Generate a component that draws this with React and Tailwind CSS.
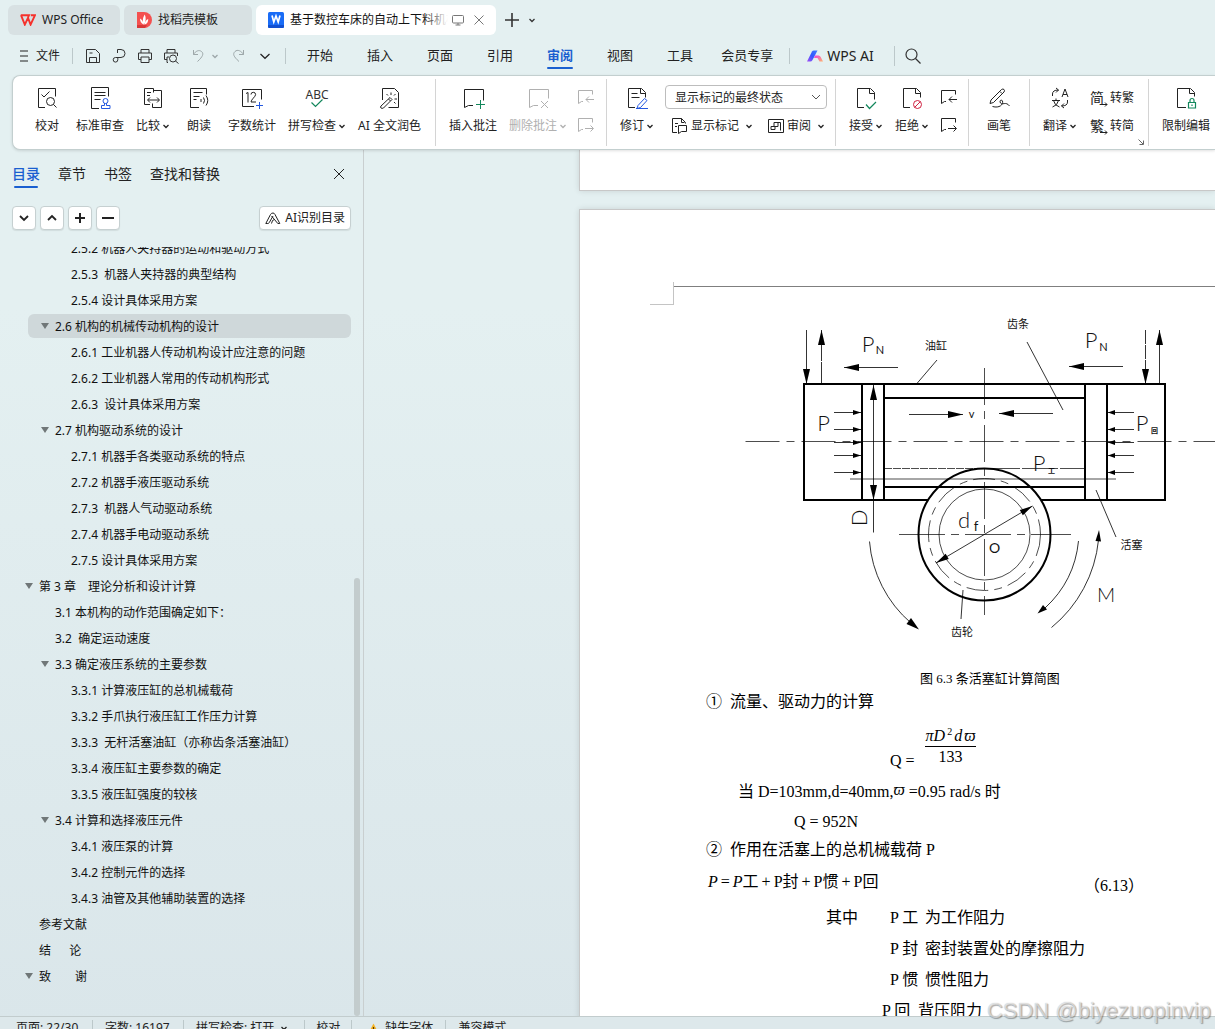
import React from "react";

const UI = "font-['Noto_Sans','Noto_Sans_CJK_SC',sans-serif]";

function Svg({ size = 16, box = 16, className = "", sw = 1, children }) {
  return (
    <svg
      width={size}
      height={size}
      viewBox={`0 0 ${box} ${box}`}
      fill="none"
      stroke="currentColor"
      strokeWidth={sw}
      className={`shrink-0 overflow-visible ${className}`}
      aria-hidden="true"
    >
      {children}
    </svg>
  );
}

const Chevron = ({ className = "" }) => (
  <Svg size={8} box={8} sw={1.3} className={className}>
    <path d="M1.500 3 4 5.500 6.500 3" />
  </Svg>
);

/* ---------- tab strip ---------- */

function TabStrip() {
  return (
    <div className="flex h-10 shrink-0 items-center gap-1 pl-2">
      <button className="flex h-[30px] w-28 items-center gap-1.5 rounded-md bg-[#d8e1e3] pl-3 text-xs text-[#222]">
        <svg width="16" height="12" viewBox="0 0 16 12" aria-hidden="true">
          <path d="M0.8 1.2H9L7.800 4 M1 1.2 4.800 10.600 8 3.800 10.600 10.600 15 1.2H10.800" fill="none" stroke="#f5322d" strokeWidth="1.900" />
        </svg>
        WPS Office
      </button>
      <button className="flex h-[30px] w-32 items-center gap-1.5 rounded-md bg-[#d8e1e3] pl-3 text-xs text-[#222]">
        <svg width="16" height="16" viewBox="0 0 16 16" aria-hidden="true">
          <path d="M1 0h7a7.500 7.500 0 0 1 0 16H1z" fill="#f4504f" />
          <path d="M1 13h10l-2 3H1z" fill="#d93838" />
          <path d="M8 13C6 9 7 5 8.800 2.500c1.400 3 1.200 7-.8 10.500zM7.400 12.600C5 11 4 9 4 6.500c2 1 3.300 3 3.400 6.100zM8.800 12.600c.2-3 1.400-4.600 3.400-5.600.2 2.600-1 4.600-3.400 5.600z" fill="#fff" />
        </svg>
        找稻壳模板
      </button>
      <div className="flex h-[30px] w-60 items-center rounded-md bg-white pl-3 pr-2.5">
        <svg width="16" height="16" viewBox="0 0 16 16" className="shrink-0" aria-hidden="true">
          <rect width="16" height="16" rx="1.500" fill="#1a6cf6" />
          <path d="M0 13h16v1.500a1.500 1.500 0 0 1-1.500 1.500h-13A1.500 1.500 0 0 1 0 14.500z" fill="#1250d0" />
          <path d="m4 3.500 1.800 6.500L8 4l2.200 6L12 3.500" fill="none" stroke="#fff" strokeWidth="1.700" />
        </svg>
        <button className="relative ml-1.5 w-[158px] overflow-hidden text-left text-xs whitespace-nowrap text-[#111]">
          基于数控车床的自动上下料机构
          <span className="absolute inset-y-0 right-0 w-6 bg-linear-to-r from-white/0 to-white" />
        </button>
        <Svg size={12} box={12} className="ml-1 text-[#777]">
          <rect x="0.500" y="1.500" width="11" height="7.500" rx="1" />
          <path d="M6 9v2M3.500 11h5" />
        </Svg>
        <button aria-label="关闭标签" className="ml-2.5 text-[#777]">
          <Svg size={10} box={10}>
            <path d="m.5.5 9 9m0-9-9 9" />
          </Svg>
        </button>
      </div>
      <button aria-label="新建" className="ml-[5px] text-[#333]">
        <Svg size={14} box={14} sw={1.6}>
          <path d="M7 0v14M0 7h14" />
        </Svg>
      </button>
      <button aria-label="标签列表" className="ml-[5px] text-[#333]">
        <Chevron />
      </button>
    </div>
  );
}

/* ---------- menu row ---------- */

const menus = ["开始", "插入", "页面", "引用", "审阅", "视图", "工具"];

function MenuRow() {
  return (
    <div className="flex h-[35px] shrink-0 items-center pb-1 text-[#222]">
      <button className="ml-5 flex items-center gap-2 text-xs">
        <Svg size={8} box={8}>
          <path d="M0 -1h8M0 4h8M0 9h8" />
        </Svg>
        文件
      </button>
      <span className="mx-3 h-4 w-px bg-[#bcc8ca]" />
      <div className="flex items-center gap-2.5 text-[#333]">
        <button aria-label="保存">
          <Svg>
            <path d="M1.500 1.500h9l4 4v9h-13zM4.500 14.500v-5h7v5M4.500 5h3" />
          </Svg>
        </button>
        <button aria-label="输出为PDF">
          <Svg>
            <path d="M6.500 5V1.500H10a4 4 0 0 1 0 8H4.500a2.300 2.300 0 1 0 2.300 2.300V9.500" />
          </Svg>
        </button>
        <button aria-label="打印">
          <Svg>
            <path d="M4 5V1.500h8V5M4 11.500H1.500V5h13v6.500H12M4 9h8v5.500H4z" />
          </Svg>
        </button>
        <button aria-label="打印预览">
          <Svg>
            <path d="M4 5V1.500h8V5M4 11.500H1.500V5h13v3M5 14.500H4V9h2" />
            <circle cx="10" cy="10.500" r="3.500" />
            <path d="m12.500 13 3 2.500" />
          </Svg>
        </button>
      </div>
      <button aria-label="撤销" className="ml-3 flex items-center gap-1 text-[#9da7a9]">
        <Svg>
          <path d="M2.500 2v4.500H7M2.500 6.500C4.500 3 8 1.500 10.500 3.500s1.500 5-4 10" />
        </Svg>
        <Chevron />
      </button>
      <button aria-label="恢复" className="ml-3 text-[#9da7a9]">
        <Svg>
          <path d="M12.500 2v4.500H8M12.500 6.500C10.500 3 6.500 1 4 3.500s-1.500 5 4 10" />
        </Svg>
      </button>
      <button aria-label="更多" className="ml-3">
        <Svg size={12} box={12} sw={1.2}>
          <path d="m1.500 4 4.500 4.300L10.500 4" />
        </Svg>
      </button>
      <span className="ml-3.5 h-4 w-px bg-[#bcc8ca]" />
      <nav className="-mt-0.5 ml-[21px] flex items-center gap-[34px] text-[13px] leading-5">
        {menus.map((m) =>
          m === "审阅" ? (
            <button key={m} className="relative font-bold text-[#1a5fd0]">
              {m}
              <span className="absolute inset-x-0 -bottom-1 h-0.5 rounded bg-[#1a5fd0]" />
            </button>
          ) : (
            <button key={m}>{m}</button>
          )
        )}
        <button className="-ml-1.5">会员专享</button>
      </nav>
      <span className="ml-4 h-4 w-px bg-[#bcc8ca]" />
      <button className="ml-[17px] flex items-center gap-[3px] text-sm">
        <svg width="17" height="12" viewBox="0 0 17 12" aria-hidden="true">
          <defs>
            <linearGradient id="aiA" x1="0" y1="1" x2="1" y2="0">
              <stop offset="0" stopColor="#a84df5" />
              <stop offset="0.500" stopColor="#3357ff" />
              <stop offset="1" stopColor="#3f7bff" />
            </linearGradient>
            <linearGradient id="aiB" x1="0" y1="0" x2="1" y2="1">
              <stop offset="0" stopColor="#f03fe0" />
              <stop offset="1" stopColor="#ffb46b" />
            </linearGradient>
          </defs>
          <path d="M0 11.500 5 1.500Q5.500.5 7 .5h3.500L5.500 10q-.8 1.500-2.300 1.500z" fill="url(#aiA)" />
          <path d="M8 5.500h3.500q1.500 0 2.200 1.500l2.300 4.500h-3.500L10.500 8H7z" fill="url(#aiB)" />
        </svg>
        WPS AI
      </button>
      <span className="ml-5 h-5 w-px bg-[#bcc8ca]" />
      <button aria-label="搜索" className="ml-2.5 text-[#333]">
        <Svg sw={1.2}>
          <circle cx="6.500" cy="6.500" r="5.500" />
          <path d="m10.500 10.500 5 5" />
        </Svg>
      </button>
    </div>
  );
}

/* ---------- ribbon ---------- */

const I = ({ children }) => (
  <Svg size={24} box={24}>
    {children}
  </Svg>
);

const icons = {
  proof: (
    <I>
      <path d="M10 21.500H3.500v-19h17v8M6.500 8.500 9 11l5.500-5.500" />
      <circle cx="15.500" cy="15.500" r="4" />
      <path d="m18.500 18.500 3 3" />
    </I>
  ),
  standard: (
    <I>
      <path d="M11 22.500H3.500v-21h17v9M6.500 6.500h11M6.500 9.500h11M6.500 13.500h6" />
      <g stroke="#2458e0">
        <circle cx="17.500" cy="15" r="2.500" />
        <path d="M16.500 17v2.500h-3v3h8.500v-3h-3.500V17" />
      </g>
    </I>
  ),
  compare: (
    <I>
      <path d="M9 18.500H3.500v-16h9v4M6 6.500h4M6 9.500h3M12.500 4.500h8v17h-9v-4M7 14h11M9 11.500 6.500 14 9 16.500M16 11.500l2.500 2.500-2.500 2.500" />
    </I>
  ),
  read: (
    <I>
      <path d="M12 21.500H3.500v-19h16v6M6.500 6.500h9M6.500 10.500h6M6.500 13.500h3M14 13v3M16.500 11.500q2 3 0 6M19 9.500q3.500 5 0 10" />
    </I>
  ),
  count: (
    <I>
      <path d="M14 20.500H2.500v-17h19v10M6 7.500l2-1v10M11 8.500q0-2.200 2.300-2.200t2.300 2.300c0 2-4.600 5-4.600 7.400h5" />
      <path d="M19.500 16v7M16 19.500h7" stroke="#2458e0" />
    </I>
  ),
  spell: (
    <I>
      <text x="12" y="13" textAnchor="middle" fontSize="12" fontFamily="Noto Sans" fill="#333" stroke="none">
        ABC
      </text>
      <path d="m6.500 16.500 4 4 7-7" stroke="#12875c" strokeWidth="1.200" />
    </I>
  ),
  polish: (
    <I>
      <path d="M4.500 14V2.500h12l4 4v15h-10M3 20l9-8.500 2 2L5.500 22q-1.500.8-2.500 0t0-2zM10.500 13l2 2M13 6.500V9M8.500 8l1.500 1.500M17.500 8 16 9.500M16.500 13H19M16 16l1.500 1.500" />
    </I>
  ),
  addNote: (
    <I>
      <path d="M12 19.500H7.500l-4 2v-18h19v11" />
      <path d="M19.500 14v9M15 18.500h9" stroke="#12875c" />
    </I>
  ),
  delNote: (
    <I>
      <path d="M12 19.500H7.500l-4 2v-18h19v9M15 15l7 7m0-7-7 7" />
    </I>
  ),
  revise: (
    <I>
      <path d="M10 21.500H3.500v-19h13l4 4v5M15.500 3v4.500h5M6.500 7.500h6M6.500 11.500h8" />
      <path d="m13 19.500 6.500-7 2.500 2-6.500 7-3.500 1zM11 22.500h12" stroke="#2458e0" />
    </I>
  ),
  accept: (
    <I>
      <path d="M10 21.500H3.500v-19h13l4 4v7M15.500 3v4.500h5" />
      <path d="m12 18.500 3.500 4 6.500-6.500" stroke="#12875c" strokeWidth="1.200" />
    </I>
  ),
  reject: (
    <I>
      <path d="M10 21.500H3.500v-19h13l4 4v5M15.500 3v4.500h5" />
      <g stroke="#d02040">
        <circle cx="17.500" cy="18.500" r="4" />
        <path d="m14.800 21.200 5.400-5.400" />
      </g>
    </I>
  ),
  pen: (
    <I>
      <path d="M4 14 14.500 3.500q1.500-1 2.500 0t0 2.500L6.500 16.500 3 17.500zM13 5.500l2 2M5.500 20.500c7 2 11-2 10-5.500-1-2-3.500-.5-2 2s5.500-2 9 3" />
    </I>
  ),
  translate: (
    <I>
      <path d="M4.500 10V8q0-4 6-4M8 2l2.500 2L8 6.500M19.500 14v2q0 4-6 4M16 17.500 13.500 20l2.500 2M14 11l3-8 3 8M15 8.500h4M4 14.500h8M8 12.500v2M5.500 14.500q1 5 6 6.500M10.500 14.500q-1 5-6 6.500" />
    </I>
  ),
  restrict: (
    <I>
      <path d="M12 21.500H3.500v-19h13l4 4v4M15.500 3v4.500h5" />
      <path d="M14.500 16.500h7v5.500h-7zM16 16.500v-2q0-2 2-2t2 2v2M18 18.500v1.500" stroke="#12875c" strokeWidth="1.200" />
    </I>
  ),
};

const Tool = ({ icon, label, menu, className = "", disabled }) => (
  <button
    disabled={disabled}
    className={`flex shrink-0 flex-col items-center gap-2 pt-2.5 ${className} ${disabled ? "text-[#b0b0b0]" : "text-[#222]"}`}
  >
    {icons[icon]}
    <span className="flex items-center gap-0.5 text-xs leading-4 whitespace-nowrap">
      {label}
      {menu && <Chevron />}
    </span>
  </button>
);

const Bar = ({ className = "" }) => <span className={`my-[3px] w-px shrink-0 bg-[#d4d4d4] ${className}`} />;

const NoteArrow = ({ back }) => (
  <Svg size={18} box={18}>
    <path d="M6 13.500H4.500l-3 2v-13h14v4" />
    {back ? <path d="M17 11.500H9M12 8.500l-3 3 3 3" /> : <path d="M8 12.500h8M13.500 9.500l3 3-3 3" />}
  </Svg>
);

const NotePair = ({ className = "", disabled, names }) => (
  <div className={`flex shrink-0 flex-col gap-1 pt-[9px] ${className} ${disabled ? "text-[#b0b0b0]" : "text-[#222]"}`}>
    <button aria-label={names[0]} disabled={disabled} className="flex h-6 items-center">
      <NoteArrow back />
    </button>
    <button aria-label={names[1]} disabled={disabled} className="flex h-6 items-center">
      <NoteArrow />
    </button>
  </div>
);

const ConvertIcon = ({ char }) => (
  <span className="relative w-[18px] text-left text-sm leading-5">
    {char}
    <Svg size={8} box={8} className="absolute right-0 bottom-0">
      <path d="M0 4.500h7M5 2.500l2 2-2 2" />
    </Svg>
  </span>
);

function Ribbon() {
  return (
    <div className="relative z-10 ml-3 flex h-[75px] shrink-0 overflow-hidden rounded-l-lg border border-r-0 border-[#c3cfcf] bg-white shadow-[0_1px_3px_rgba(0,0,0,0.12)]">
      <Tool icon="proof" label="校对" className="ml-[22px]" />
      <Tool icon="standard" label="标准审查" className="ml-[17px]" />
      <Tool icon="compare" label="比较" menu className="ml-3" />
      <Tool icon="read" label="朗读" className="ml-[17px]" />
      <Tool icon="count" label="字数统计" className="ml-[17px]" />
      <Tool icon="spell" label="拼写检查" menu className="ml-3" />
      <Tool icon="polish" label="AI 全文润色" className="ml-3" />
      <Bar className="ml-3.5" />
      <Tool icon="addNote" label="插入批注" className="ml-[13px]" />
      <Tool icon="delNote" label="删除批注" menu disabled className="ml-3" />
      <NotePair className="ml-2.5" disabled names={["上一条批注", "下一条批注"]} />
      <Bar className="ml-[11px]" />
      <Tool icon="revise" label="修订" menu className="ml-[13px]" />
      <div className="ml-[11px] flex shrink-0 flex-col gap-1 pt-[9px] text-xs text-[#222]">
        <div className="relative flex h-6 w-[162px] items-center">
          <select
            aria-label="标记显示状态"
            defaultValue="final"
            className="h-6 w-full appearance-none rounded border border-[#bdbdbd] bg-white pt-0.5 pl-[9px] text-xs leading-4"
          >
            <option value="final">显示标记的最终状态</option>
          </select>
          <Svg size={10} box={10} className="pointer-events-none absolute right-1.5 text-[#555]">
            <path d="m1 3 4 4 4-4" />
          </Svg>
        </div>
        <div className="flex h-6 items-center pt-0.5 pl-1.5">
          <button className="flex items-center gap-0.5">
            <Svg size={18} box={18}>
              <path d="M6 15.500H1.500v-14h9l4 4v1M10.500 1.500v4h3M4 6.500h3M4 9.500h2M7.500 16.500v-8h8v6h-5z" />
            </Svg>
            显示标记
            <Chevron className="ml-1" />
          </button>
          <button className="ml-3.5 flex items-center gap-0.5">
            <Svg size={18} box={18}>
              <path d="M1.500 2.500h15v13h-15zM4 9.500h4v3H4zM7 9.500v-4h4v4H8M13.500 5.500v8M11 5.500h2.500" />
            </Svg>
            审阅
            <Chevron className="ml-1" />
          </button>
        </div>
      </div>
      <Bar className="ml-2" />
      <Tool icon="accept" label="接受" menu className="ml-[13px]" />
      <Tool icon="reject" label="拒绝" menu className="ml-3" />
      <NotePair className="ml-[11px]" names={["上一条修订", "下一条修订"]} />
      <Bar className="ml-2.5" />
      <Tool icon="pen" label="画笔" className="ml-[18px]" />
      <Bar className="ml-[18px]" />
      <Tool icon="translate" label="翻译" menu className="ml-[13px]" />
      <div className="ml-[13px] flex shrink-0 flex-col gap-1 pt-2.5 text-xs text-[#222]">
        <button className="flex h-6 items-center gap-0.5">
          <ConvertIcon char="简" />
          转繁
        </button>
        <button className="flex h-6 items-center gap-0.5">
          <ConvertIcon char="繁" />
          转简
        </button>
      </div>
      <button aria-label="更多选项" className="mb-1 ml-1 self-end text-[#666]">
        <Svg size={6} box={6}>
          <path d="m.5.5 4.500 4.500M5.500 1.500v4h-4" />
        </Svg>
      </button>
      <Bar className="ml-1" />
      <Tool icon="restrict" label="限制编辑" className="ml-[13px]" />
    </div>
  );
}

/* ---------- outline panel ---------- */

const outline = [
  [3, "2.5.2 机器人夹持器的运动和驱动方式"],
  [3, "2.5.3\u00a0 机器人夹持器的典型结构"],
  [3, "2.5.4 设计具体采用方案"],
  [2, "2.6 机构的机械传动机构的设计", true, true],
  [3, "2.6.1 工业机器人传动机构设计应注意的问题"],
  [3, "2.6.2 工业机器人常用的传动机构形式"],
  [3, "2.6.3\u00a0 设计具体采用方案"],
  [2, "2.7 机构驱动系统的设计", true],
  [3, "2.7.1 机器手各类驱动系统的特点"],
  [3, "2.7.2 机器手液压驱动系统"],
  [3, "2.7.3\u00a0 机器人气动驱动系统"],
  [3, "2.7.4 机器手电动驱动系统"],
  [3, "2.7.5 设计具体采用方案"],
  [1, "第 3 章\u3000理论分析和设计计算", true],
  [2, "3.1 本机构的动作范围确定如下："],
  [2, "3.2\u00a0 确定运动速度"],
  [2, "3.3 确定液压系统的主要参数", true],
  [3, "3.3.1 计算液压缸的总机械载荷"],
  [3, "3.3.2 手爪执行液压缸工作压力计算"],
  [3, "3.3.3\u00a0 无杆活塞油缸（亦称齿条活塞油缸）"],
  [3, "3.3.4 液压缸主要参数的确定"],
  [3, "3.3.5 液压缸强度的较核"],
  [2, "3.4 计算和选择液压元件", true],
  [3, "3.4.1 液压泵的计算"],
  [3, "3.4.2 控制元件的选择"],
  [3, "3.4.3 油管及其他辅助装置的选择"],
  [1, "参考文献"],
  [1, "结\u3000\u00a0 论"],
  [1, "致\u3000\u3000谢", true],
];

const indents = { 1: "pl-[11px]", 2: "pl-[27px]", 3: "pl-[43px]" };
const squareBtn =
  "flex size-6 items-center justify-center rounded border border-[#c6d0d1] bg-white text-[#222] shadow-[0_1px_1px_rgba(0,0,0,0.08)]";

function Outline() {
  return (
    <aside className="flex w-[364px] shrink-0 flex-col border-r border-[#c9cfd0]">
      <div className="flex h-12 shrink-0 items-center gap-[18px] pl-3 pr-[18px] text-sm leading-5 text-[#222]">
        <button className="relative font-medium text-[#1a5fd0]">
          目录
          <span className="absolute inset-x-0.5 -bottom-1 h-0.5 rounded bg-[#1a5fd0]" />
        </button>
        <button>章节</button>
        <button>书签</button>
        <button>查找和替换</button>
        <button aria-label="关闭" className="ml-auto">
          <Svg size={12} box={12}>
            <path d="m1 1 10 10M11 1 1 11" />
          </Svg>
        </button>
      </div>
      <div className="mt-2 flex shrink-0 items-center gap-1 px-3">
        <button aria-label="展开" className={squareBtn}>
          <Svg size={12} box={12} sw={1.8}>
            <path d="m2 4 4 4 4-4" />
          </Svg>
        </button>
        <button aria-label="收起" className={squareBtn}>
          <Svg size={12} box={12} sw={1.8}>
            <path d="m2 8 4-4 4 4" />
          </Svg>
        </button>
        <button aria-label="提升" className={squareBtn}>
          <Svg size={12} box={12} sw={2}>
            <path d="M6 1v10M1 6h10" />
          </Svg>
        </button>
        <button aria-label="降低" className={squareBtn}>
          <Svg size={12} box={12} sw={2}>
            <path d="M0 6h12" />
          </Svg>
        </button>
        <button className="ml-auto flex h-6 items-center gap-1 rounded border border-[#c6d0d1] bg-white px-[5px] text-xs text-[#222] shadow-[0_1px_1px_rgba(0,0,0,0.08)]">
          <Svg>
            <path d="M.8 13.500 5.500 4.500q.8-1.500 2.500-1.500 1.300 0 2 1.500l4.800 9h-2L6.500 6M.8 13.500h2q1 0 1.500-1L8 6M9.500 9.500q-2.500 0-3 4" />
          </Svg>
          AI识别目录
        </button>
      </div>
      <div className="mt-[17px] flex min-h-0 flex-1 overflow-hidden">
        <ul className="-mt-3 ml-7 w-[323px] shrink-0">
          {outline.map(([level, text, open, active], i) => (
            <li key={i} className="py-px">
              <button
                className={`flex h-6 w-full items-center rounded-md pt-0.5 text-left text-xs whitespace-pre text-[#111] ${indents[level]} ${active ? "bg-[#cfd8da]" : ""}`}
              >
                {open && (
                  <svg width="8" height="8" viewBox="0 0 8 8" className="mr-1.5 -mt-0.5 -ml-3.5" aria-hidden="true">
                    <path d="M0 1h8L4 7z" fill="#707778" />
                  </svg>
                )}
                {text}
              </button>
            </li>
          ))}
        </ul>
        <div className="ml-[3px] flex w-1.5 flex-col justify-end">
          <div className="h-[57%] rounded bg-[#c3cccd]" />
        </div>
      </div>
    </aside>
  );
}

/* ---------- technical drawing ---------- */

function Arrow({ from, to, len = 15, wide = 7, both, dash }) {
  const [x1, y1] = from;
  const [x2, y2] = to;
  const d = Math.hypot(x2 - x1, y2 - y1);
  const ux = (x2 - x1) / d;
  const uy = (y2 - y1) / d;
  const head = (x, y, s) => {
    const bx = x - ux * len * s;
    const by = y - uy * len * s;
    const h = wide / 2;
    return `M${x} ${y}L${bx - uy * h} ${by + ux * h}L${bx + uy * h} ${by - ux * h}Z`;
  };
  return (
    <g>
      <path d={`M${x1} ${y1}L${x2} ${y2}`} strokeDasharray={dash} />
      <path d={head(x2, y2, 1) + (both ? head(x1, y1, -1) : "")} fill="#000" stroke="none" />
    </g>
  );
}

function Diagram() {
  const rows = [412.5, 429.5, 442.5, 455.5, 472.5];
  return (
    <svg width="480" height="362" viewBox="735 305 480 362" className="ml-[155px] block max-w-none" role="img" aria-label="齿条活塞缸计算简图">
      <g fill="none" stroke="#000" strokeWidth="1">
        <g strokeWidth="2">
          <path d="M928 500H804V384H1165V500H1041M862 384V500M884 384V500M1085 384V500M1107 384V500M884 398H1085M884 487H1085" />
          <circle cx="984.500" cy="534.500" r="66" />
        </g>
        <g strokeWidth="0.700">
          <path d="M745.500 441.500H1215" strokeDasharray="34 7 8 7" />
          <path d="M984.500 368V615" strokeDasharray="37 6 8 6" />
          <path d="M899 534.500H1071" strokeDasharray="46 6 8 6" />
          <circle cx="984.500" cy="534.500" r="56" strokeDasharray="22 6 8 6" />
          <circle cx="984.500" cy="534.500" r="45.500" />
          <path d="M884 468.500H984" strokeDasharray="8 1" />
          <path d="M984 468.500H1085" strokeDasharray="36 2" />
          <path d="M850 479H1116" />
        </g>
        <g strokeWidth="0.800">
          {rows.map((y) => (
            <g key={y}>
              <Arrow from={[834, y]} to={[861, y]} len={8} wide={5} />
              <Arrow from={[1134, y]} to={[1108, y]} len={7} wide={5} />
            </g>
          ))}
          <Arrow from={[806.5, 330]} to={[806.5, 384]} />
          <Arrow from={[821.5, 384]} to={[821.5, 330]} dash="22 1" />
          <Arrow from={[1145.5, 330]} to={[1145.5, 384]} dash="14 1" />
          <Arrow from={[1159.5, 384]} to={[1159.5, 330]} />
          <Arrow from={[898, 367.5]} to={[844, 367.5]} />
          <Arrow from={[1123, 366.5]} to={[1069, 366.5]} />
          <Arrow from={[909, 414.5]} to={[963, 414.5]} />
          <Arrow from={[1053, 413.5]} to={[999, 413.5]} />
          <Arrow from={[873.5, 385]} to={[873.5, 500]} both />
          <path d="M873.500 500V532.500" />
          <Arrow from={[936, 563]} to={[1032.5, 506]} both len={13} wide={6} />
          <path d="M937 360 916.500 384M1027 342 1063 410M1096 490 1116 537M963 590 961 619" />
          <path d="M869.500 541.500A120 120 0 0 0 911 623M1078.500 541A105 105 0 0 1 1045 608M1051.500 627.500A130 130 0 0 0 1098.500 540" />
        </g>
        <g fill="#000" stroke="none">
          <path d="M919 629.500 906.500 624 911 618z" />
          <path d="M1037.500 613.500 1043 605 1047 609.500z" />
          <path d="M1099 530 1101 541.500 1095.500 541z" />
        </g>
      </g>
      <g fill="#111" fontFamily="Lato" fontWeight="300" textAnchor="middle">
        <g fontSize="22">
          <text x="868" y="352">P</text>
          <text x="1091" y="348">P</text>
          <text x="823.500" y="431">P</text>
          <text x="1142" y="431">P</text>
          <text x="1039" y="471">P</text>
          <text x="964" y="528">d</text>
          <text x="0" y="7" transform="translate(860 518) rotate(-90)">D</text>
        </g>
        <text x="1106" y="602" fontSize="20">M</text>
        <g fontWeight="400">
          <text x="880" y="354" fontSize="11">N</text>
          <text x="1103.500" y="351" fontSize="11">N</text>
          <text x="971.500" y="418" fontSize="11">v</text>
          <text x="976" y="531" fontSize="13">f</text>
          <text x="994.500" y="553" fontSize="14">O</text>
        </g>
      </g>
      <g fill="#111" fontFamily="Noto Sans CJK SC" textAnchor="middle" fontSize="11">
        <text x="936" y="350">油缸</text>
        <text x="1018" y="328">齿条</text>
        <text x="1131.500" y="549">活塞</text>
        <text x="962" y="636">齿轮</text>
        <g fontWeight="700">
          <text x="1051.500" y="473" fontSize="7">工</text>
          <text x="1154.500" y="433" fontSize="7">回</text>
        </g>
      </g>
    </svg>
  );
}

/* ---------- document ---------- */

const forces = [
  ["工", "为工作阻力"],
  ["封", "密封装置处的摩擦阻力"],
  ["惯", "惯性阻力"],
];

function Document() {
  return (
    <main className="flex min-w-0 flex-1 flex-col overflow-hidden pl-[215px]">
      <section className="h-[41px] shrink-0 border-b border-l border-[#c8c8c8] bg-white shadow-[0_0_6px_rgba(0,0,0,0.12)]" />
      <article className="mt-[18px] shrink-0 border-t border-l border-[#c8c8c8] bg-white font-['Liberation_Serif','Noto_Sans_CJK_SC',serif] text-base leading-5 whitespace-pre text-black shadow-[0_0_6px_rgba(0,0,0,0.12)]">
        <div className="mt-[72px] flex pl-[70px]">
          <div className="h-[23px] w-6 border-r border-b border-[#c4c4c4]" />
          <div className="mt-1 flex-1 border-t border-[#7f7f7f]" />
        </div>
        <Diagram />
        <div className="mt-px pl-[126px]">
          <p className="flex h-[22px] items-center pl-[214px] text-[13px]">图 6.3 条活塞缸计算简图</p>
          <p className="flex h-6 items-center gap-2">
            <span>①</span>流量、驱动力的计算
          </p>
          <div className="flex h-16 items-start pl-[184px]">
            <span className="mt-[37px]">Q =</span>
            <span className="mt-3 ml-2.5 flex flex-col items-center">
              <span className="flex gap-0.5 border-b border-black px-px italic">
                <span>πD</span>
                <sup className="top-0 text-[10px] leading-3 not-italic">2</sup>
                <span>d</span>
                <span>ϖ</span>
              </span>
              <span>133</span>
            </span>
          </div>
          <p className="flex h-7 items-center pl-8">
            当 D=103mm,d=40mm,<i className="mb-1">ϖ</i> =0.95 rad/s 时
          </p>
          <p className="flex h-8 items-center pl-[88px]">Q = 952N</p>
          <p className="flex h-[23px] items-center gap-2">
            <span>②</span>作用在活塞上的总机械载荷 P
          </p>
          <div className="flex h-[41px] items-center">
            <span className="flex w-96 gap-[3px] pl-0.5">
              <i>P</i>
              <span>=</span>
              <span>
                <i>P</i>工
              </span>
              <span>+</span>
              <span>P封</span>
              <span>+</span>
              <span>P惯</span>
              <span>+</span>
              <span>P回</span>
            </span>
            <span className="-ml-1.5 pt-2">（6.13）</span>
          </div>
          {forces.map(([sub, text], i) => (
            <p key={sub} className="flex h-[31px] items-center">
              <span className="ml-[120px] w-16">{i === 0 ? "其中" : ""}</span>
              <span className="w-[35px]">P {sub}</span>
              {text}
            </p>
          ))}
          <p className="flex h-[31px] items-center pl-44">
            <span className="w-9">P 回</span>背压阻力
          </p>
        </div>
      </article>
    </main>
  );
}

/* ---------- status bar ---------- */

const Sep = () => <span className="mx-3 h-4 w-px bg-[#bcc8ca]" />;

function StatusBar() {
  return (
    <footer className="h-[13px] shrink-0 overflow-hidden border-t border-[#c2cccd] bg-[#dde8eb]">
      <div className="flex h-[22px] items-center pl-4 text-xs whitespace-nowrap text-[#222]">
        <span className="w-16">页面: 22/30</span>
        <Sep />
        <span className="w-[66px]">字数: 16197</span>
        <Sep />
        <button className="flex items-center gap-1.5">
          拼写检查: 打开
          <Chevron />
        </button>
        <span className="ml-4 h-4 w-px bg-[#bcc8ca]" />
        <button className="ml-[11px]">校对</button>
        <span className="ml-[11px] h-4 w-px bg-[#bcc8ca]" />
        <button className="ml-4 flex items-center gap-1.5">
          <svg width="11" height="11" viewBox="0 0 11 11" aria-hidden="true">
            <path d="M5.500.5 11 11H0z" fill="#f5b325" />
            <path d="M5.500 4v3.500M5.500 8.500v1.200" stroke="#5a3a00" strokeWidth="1.200" />
          </svg>
          缺失字体
        </button>
        <Sep />
        <span>兼容模式</span>
      </div>
    </footer>
  );
}

export default function App() {
  return (
    <div className={`relative flex h-screen flex-col overflow-hidden bg-linear-to-b from-[#e4f0f1] from-30% to-[#dae6ea] ${UI}`}>
      <TabStrip />
      <MenuRow />
      <Ribbon />
      <div className="flex min-h-0 flex-1">
        <Outline />
        <Document />
      </div>
      <StatusBar />
      <div className="pointer-events-none absolute right-1 bottom-1 z-20 font-['Liberation_Sans',sans-serif] text-[22px] leading-7 text-white/60 [text-shadow:1px_1px_1px_rgba(0,0,0,0.3),0_0_1px_rgba(0,0,0,0.3)]">
        CSDN @biyezuopinvip
      </div>
    </div>
  );
}
